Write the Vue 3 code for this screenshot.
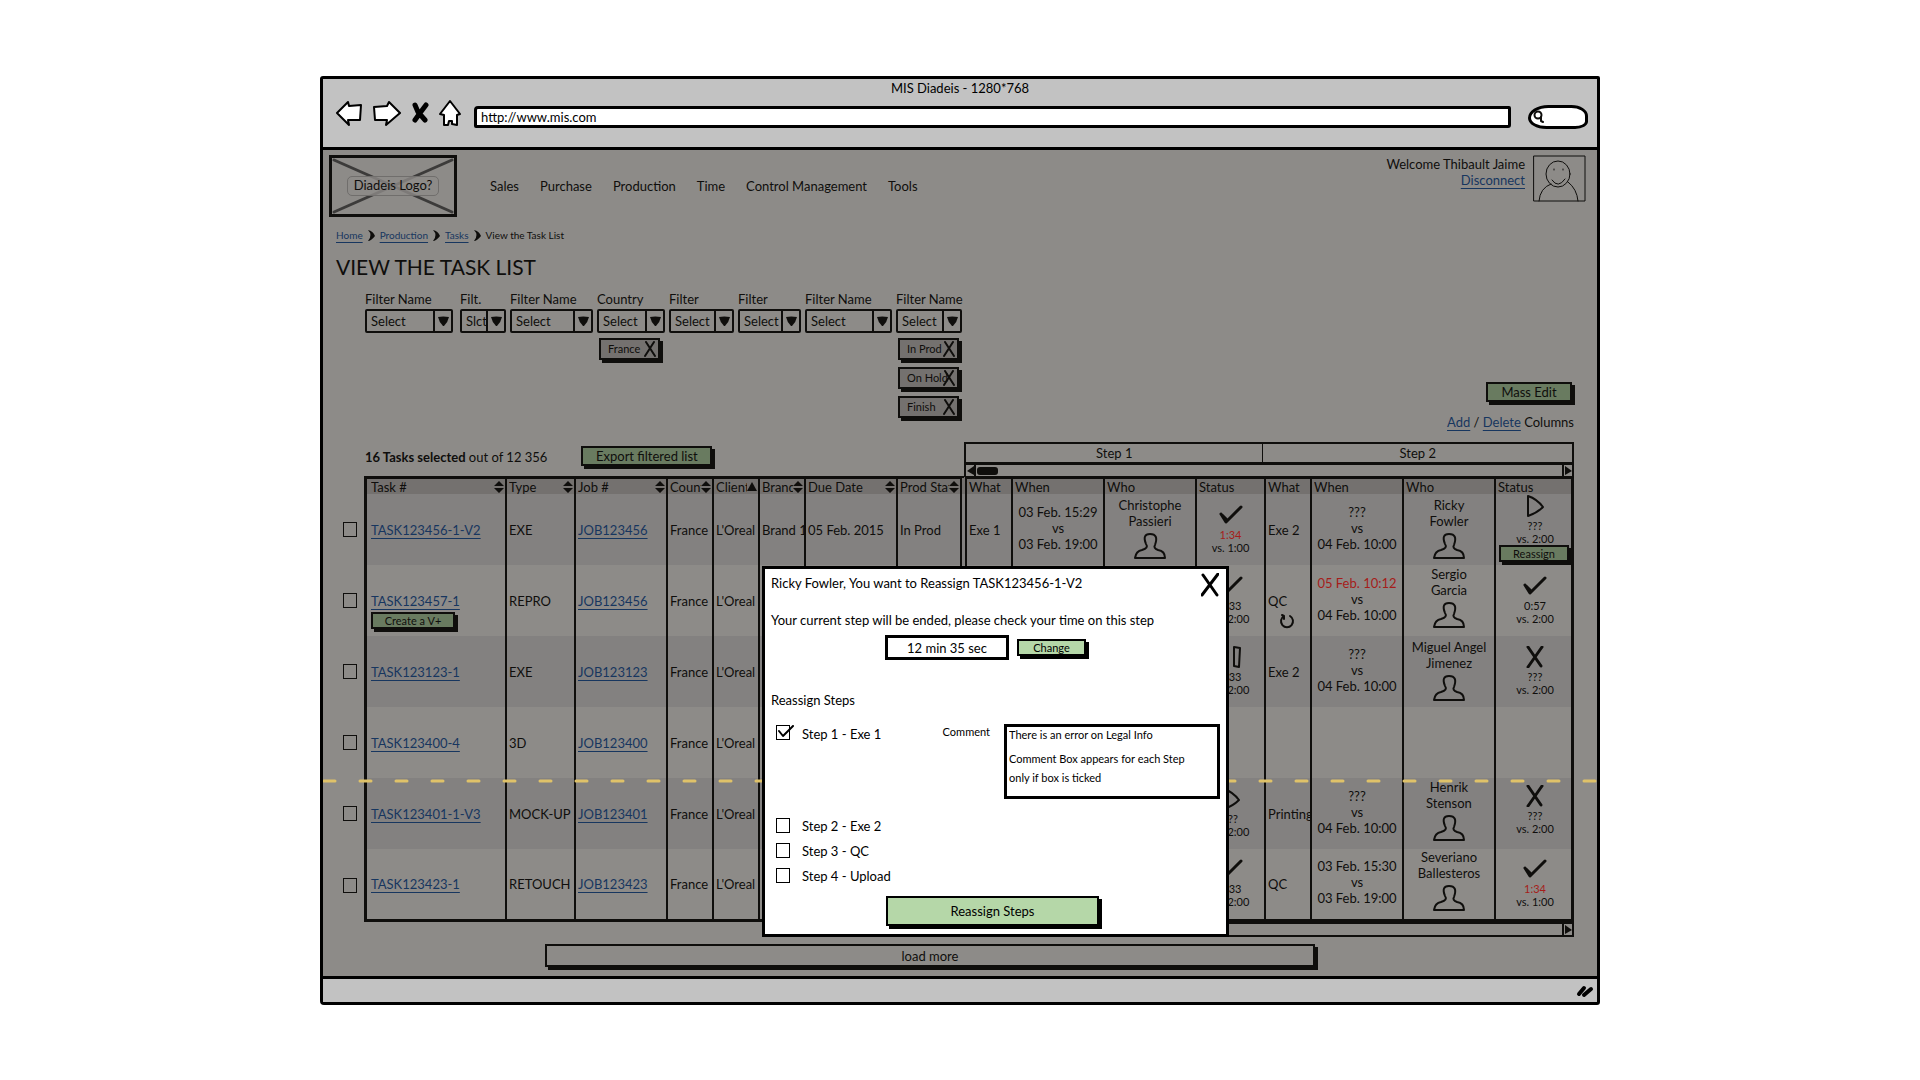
<template>
  <div class="page">
    <div class="browser">
      <!-- Barra del navegador -->
      <header class="toolbar">
        <div class="window-title">MIS Diadeis - 1280*768</div>
        <div class="toolbar-row">
          <button class="icon-btn" aria-label="Back">
            <svg width="28" height="26" viewBox="0 0 28 26"><path d="M2 13 13 2l1 4 12-1-1 15-12 0 1 5z" class="nav-shape" /></svg>
          </button>
          <button class="icon-btn" aria-label="Forward">
            <svg width="30" height="26" viewBox="0 0 30 26"><path d="M28 13 17 2l-2 4-13 1 1 13 12 0-1 5z" class="nav-shape" /></svg>
          </button>
          <button class="icon-btn stop" aria-label="Stop">
            <svg width="18" height="22" viewBox="0 0 18 22"><path d="M4 3 7 10 14 18M15 3 9 11 4 18" class="stop-shape" /></svg>
          </button>
          <button class="icon-btn" aria-label="Home">
            <svg width="24" height="28" viewBox="0 0 24 28"><path d="M12 2 2 15l4 1 0 10 4 0 1-4 3 0 0 3 5 1 0-10 3-1z" class="nav-shape" /></svg>
          </button>
          <input v-model="url" class="url" aria-label="Address">
          <label class="search">
            <svg width="12" height="14" viewBox="0 0 12 14"><circle cx="5" cy="5" r="3.5" /><path d="M8 7v4l2 1" /></svg>
            <input v-model="busqueda" aria-label="Search">
          </label>
        </div>
      </header>

      <main class="body">
        <div class="top">
          <div class="logo">
            <svg class="logo-cross" viewBox="0 0 122 56" preserveAspectRatio="none"><path d="M2 2 120 54M120 2 2 54" /></svg>
            <span class="logo-text">Diadeis Logo?</span>
          </div>
          <nav class="menu">
            <span v-for="item in menu" :key="item">{{ item }}</span>
          </nav>
          <div class="user">
            <span>Welcome Thibault Jaime</span>
            <a href="#">Disconnect</a>
          </div>
          <svg class="avatar" width="53" height="47" viewBox="0 0 53 47">
            <rect x="1" y="1" width="51" height="45" />
            <ellipse cx="25" cy="19" rx="12" ry="13" />
            <path d="M19 25q6 9 13-1M18 29Q7 33 6 46M35 27q9 7 10 19M21 14v1M30 14v1" />
          </svg>
        </div>

        <nav class="crumbs">
          <template v-for="miga in migas" :key="miga">
            <a href="#">{{ miga }}</a>
            <svg width="7" height="11" viewBox="0 0 7 11"><path d="M0 0q5 5 0 11 3 0 7-5Q5 1 0 0z" /></svg>
          </template>
          <span>View the Task List</span>
        </nav>
        <h1 class="title">VIEW THE TASK LIST</h1>

        <!-- Filtros -->
        <div class="filters-row">
          <div class="filters">
            <div v-for="(filtro, index) in filtros" :key="index" class="filter" :style="{ width: filtro.ancho + 'px' }">
              <label :for="'filtro' + index">{{ filtro.nombre }}</label>
              <div class="select-box">
                <select :id="'filtro' + index">
                  <option>{{ filtro.valor || 'Select' }}</option>
                </select>
                <span class="arrow"><svg width="11" height="10" viewBox="0 0 11 10"><path d="M0 1q5-1 11 0Q10 6 6 10H5Q1 6 0 1z" /></svg></span>
              </div>
              <button v-for="chip in filtro.chips" :key="chip" class="chip" @click="quitarChip(filtro, chip)">
                <span>{{ chip }}</span>
                <svg width="12" height="16" viewBox="0 0 12 16"><path d="M2 1 11 15M10 1 1 15" /></svg>
              </button>
            </div>
          </div>
          <div class="actions">
            <button class="btn mass">Mass Edit</button>
            <p><a href="#">Add</a> / <a href="#">Delete</a> Columns</p>
          </div>
        </div>

        <div class="summary">
          <p><b>16 Tasks selected</b> out of 12 356</p>
          <button class="btn export">Export filtered list</button>
          <div class="steps-panel">
            <div class="steps">
              <span class="step-one">Step 1</span>
              <span class="step-two">Step 2</span>
            </div>
            <div class="scroll">
              <span class="scroll-end left"><svg width="7" height="9" viewBox="0 0 7 9"><path d="M7 0v9L0 5z" /></svg></span>
              <span class="thumb"></span>
              <span class="scroll-end right"><svg width="7" height="9" viewBox="0 0 7 9"><path d="M0 0v9l7-4z" /></svg></span>
            </div>
          </div>
        </div>

        <!-- Tabla de tareas -->
        <table class="tasks">
          <colgroup>
            <col v-for="(col, index) in columnas" :key="index" :style="{ width: col.ancho + 'px' }">
          </colgroup>
          <thead>
            <tr>
              <th v-for="(col, index) in columnas" :key="index" :class="{ pick: index === 0, split: index === 8 }">
                <div class="head">
                  <span>{{ col.nombre }}</span>
                  <svg v-if="col.orden" width="11" height="12" viewBox="0 0 11 12">
                    <path v-if="col.orden === 'up'" d="M5 1 10 10H0z" />
                    <path v-else d="M5 0 10 5H0zM0 7h10L5 12z" />
                  </svg>
                </div>
              </th>
            </tr>
          </thead>
          <tbody>
            <tr v-for="tarea in tareas" :key="tarea.id">
              <td class="pick"><input v-model="tarea.marcada" type="checkbox" class="check" :aria-label="tarea.id"></td>
              <td class="task-cell">
                <div class="stack">
                  <a href="#">{{ tarea.id }}</a>
                  <button v-if="tarea.crear" class="btn small create">Create a V+</button>
                </div>
              </td>
              <td>{{ tarea.tipo }}</td>
              <td><a href="#">{{ tarea.job }}</a></td>
              <td>France</td>
              <td>L'Oreal</td>
              <td>Brand 1</td>
              <td>05 Feb. 2015</td>
              <td class="split">In Prod</td>
              <template v-for="(paso, index) in tarea.pasos" :key="index">
                <td>
                  <div class="stack">
                    <span>{{ paso.que }}</span>
                    <svg v-if="paso.repetir" class="loop" width="16" height="16" viewBox="0 0 16 16"><path d="M11 3a6 6 0 1 1-6 0M5 3 3 2M5 3l0 3" /></svg>
                  </div>
                </td>
                <td class="center">
                  <template v-if="paso.inicio">
                    <div :class="{ late: paso.tarde }">{{ paso.inicio }}</div>
                    <div>vs</div>
                    <div>{{ paso.fin }}</div>
                  </template>
                </td>
                <td class="center" :class="{ raised: tarea.subir }">
                  <template v-if="paso.quien">
                    <div v-for="parte in paso.quien" :key="parte">{{ parte }}</div>
                    <svg class="person" width="32" height="26" viewBox="0 0 32 26">
                      <path d="M1 25Q2 18 8 17q7-2 4-6Q8 1 16 1q9 0 5 11-2 3 3 5 7 1 7 8z" />
                    </svg>
                  </template>
                </td>
                <td class="center status" :class="{ raised: paso.icono === 'x' && tarea.subir }">
                  <template v-if="paso.icono">
                    <svg class="state" width="24" height="22" viewBox="0 0 24 22">
                      <path :d="iconos[paso.icono]" :class="'trazo-' + paso.icono" />
                    </svg>
                    <div :class="{ late: paso.excedido }">{{ paso.tiempo }}</div>
                    <div>vs. {{ paso.limite }}</div>
                    <button v-if="paso.reasignar" class="btn small reassign" @click="abierto = true">Reassign</button>
                  </template>
                </td>
              </template>
            </tr>
          </tbody>
        </table>
        <div class="scroll bottom-scroll">
          <span class="scroll-end right"><svg width="7" height="9" viewBox="0 0 7 9"><path d="M0 0v9l7-4z" /></svg></span>
        </div>
        <button class="load-more">load more</button>

        <svg class="fold" height="4"><line x1="1" y1="2" x2="100%" y2="2" /></svg>

        <!-- Ventana de reasignación -->
        <section v-if="abierto" class="modal">
          <div class="modal-head">
            <h2>Ricky Fowler, You want to Reassign TASK123456-1-V2</h2>
            <button class="close" aria-label="Close" @click="abierto = false">
              <svg width="18" height="24" viewBox="0 0 18 24"><path d="M2 2 16 22M17 1 1 22" /></svg>
            </button>
          </div>
          <p class="notice">Your current step will be ended, please check your time on this step</p>
          <div class="time-row">
            <input v-model="tiempo" class="time" aria-label="Time">
            <button class="btn small light">Change</button>
          </div>
          <h3>Reassign Steps</h3>
          <div class="step-row first">
            <label class="option">
              <span class="tick-box">
                <input v-model="pasos[0].activo" type="checkbox" class="check">
                <svg v-if="pasos[0].activo" width="18" height="17" viewBox="0 0 18 17"><path d="M3 6 7 11 17 1" /></svg>
              </span>
              {{ pasos[0].nombre }}
            </label>
            <label for="comentario" class="comment-label">Comment</label>
            <div class="comment">
              <textarea id="comentario" v-model="comentario" rows="1"></textarea>
              <p>Comment Box appears for each Step only if box is ticked</p>
            </div>
          </div>
          <div v-for="paso in pasos.slice(1)" :key="paso.nombre" class="step-row">
            <label class="option">
              <span class="tick-box"><input v-model="paso.activo" type="checkbox" class="check"></span>
              {{ paso.nombre }}
            </label>
          </div>
          <button class="btn light submit">Reassign Steps</button>
        </section>
      </main>

      <footer class="statusbar">
        <svg width="18" height="14" viewBox="0 0 18 14"><path d="M3 10 8 4M8 11 15 5" /></svg>
      </footer>
    </div>
  </div>
</template>

<script setup>
import { ref } from 'vue'

const url = ref('http://www.mis.com')
const busqueda = ref('')
const tiempo = ref('12 min 35 sec')
const comentario = ref('There is an error on Legal Info')
const abierto = ref(true)

const menu = ['Sales', 'Purchase', 'Production', 'Time', 'Control Management', 'Tools']
const migas = ['Home', 'Production', 'Tasks']

const filtros = ref([
  { nombre: 'Filter Name', ancho: 88 },
  { nombre: 'Filt.', ancho: 46, valor: 'Slct' },
  { nombre: 'Filter Name', ancho: 83 },
  { nombre: 'Country', ancho: 68, chips: ['France'] },
  { nombre: 'Filter', ancho: 65 },
  { nombre: 'Filter', ancho: 63 },
  { nombre: 'Filter Name', ancho: 87 },
  { nombre: 'Filter Name', ancho: 66, chips: ['In Prod', 'On Hold', 'Finish'] }
])

const columnas = [
  { nombre: '', ancho: 27 },
  { nombre: 'Task #', ancho: 140, orden: 'both' },
  { nombre: 'Type', ancho: 69, orden: 'both' },
  { nombre: 'Job #', ancho: 92, orden: 'both' },
  { nombre: 'Country', ancho: 46, orden: 'both' },
  { nombre: 'Client', ancho: 46, orden: 'up' },
  { nombre: 'Brand', ancho: 46, orden: 'both' },
  { nombre: 'Due Date', ancho: 92, orden: 'both' },
  { nombre: 'Prod Status', ancho: 69, orden: 'both' },
  { nombre: 'What', ancho: 46 },
  { nombre: 'When', ancho: 92 },
  { nombre: 'Who', ancho: 92 },
  { nombre: 'Status', ancho: 69 },
  { nombre: 'What', ancho: 46 },
  { nombre: 'When', ancho: 92 },
  { nombre: 'Who', ancho: 92 },
  { nombre: 'Status', ancho: 78 }
]

const iconos = {
  check: 'M2 10 7 18 22 3M3 11 7 15',
  play: 'M5 1 5 21Q14 18 20 12 14 4 5 1z',
  pause: 'M3 2 9 1 9 21 4 21zM15 1 21 2 20 21 15 20z',
  x: 'M5 1 18 20M19 1 5 21'
}

const ejecucion = { que: 'Exe 1', inicio: '03 Feb. 15:29', fin: '03 Feb. 19:00', quien: ['Christophe', 'Passieri'] }

const tareas = ref([
  {
    id: 'TASK123456-1-V2', tipo: 'EXE', job: 'JOB123456',
    pasos: [
      { ...ejecucion, icono: 'check', tiempo: '1:34', limite: '1:00', excedido: true },
      { que: 'Exe 2', inicio: '???', fin: '04 Feb. 10:00', quien: ['Ricky', 'Fowler'], icono: 'play', tiempo: '???', limite: '2:00', reasignar: true }
    ]
  },
  {
    id: 'TASK123457-1', tipo: 'REPRO', job: 'JOB123456', crear: true, subir: true,
    pasos: [
      { ...ejecucion, icono: 'check', tiempo: '1:33', limite: '2:00' },
      { que: 'QC', repetir: true, inicio: '05 Feb. 10:12', tarde: true, fin: '04 Feb. 10:00', quien: ['Sergio', 'Garcia'], icono: 'check', tiempo: '0:57', limite: '2:00' }
    ]
  },
  {
    id: 'TASK123123-1', tipo: 'EXE', job: 'JOB123123',
    pasos: [
      { ...ejecucion, icono: 'pause', tiempo: '1:33', limite: '2:00' },
      { que: 'Exe 2', inicio: '???', fin: '04 Feb. 10:00', quien: ['Miguel Angel', 'Jimenez'], icono: 'x', tiempo: '???', limite: '2:00' }
    ]
  },
  { id: 'TASK123400-4', tipo: '3D', job: 'JOB123400', pasos: [{}, {}] },
  {
    id: 'TASK123401-1-V3', tipo: 'MOCK-UP', job: 'JOB123401', subir: true,
    pasos: [
      { ...ejecucion, icono: 'play', tiempo: '???', limite: '2:00' },
      { que: 'Printing', inicio: '???', fin: '04 Feb. 10:00', quien: ['Henrik', 'Stenson'], icono: 'x', tiempo: '???', limite: '2:00' }
    ]
  },
  {
    id: 'TASK123423-1', tipo: 'RETOUCH', job: 'JOB123423', subir: true,
    pasos: [
      { ...ejecucion, icono: 'check', tiempo: '1:33', limite: '2:00' },
      { que: 'QC', inicio: '03 Feb. 15:30', fin: '03 Feb. 19:00', quien: ['Severiano', 'Ballesteros'], icono: 'check', tiempo: '1:34', limite: '1:00', excedido: true }
    ]
  }
])

const pasos = ref([
  { nombre: 'Step 1 - Exe 1', activo: true },
  { nombre: 'Step 2 - Exe 2', activo: false },
  { nombre: 'Step 3 - QC', activo: false },
  { nombre: 'Step 4 - Upload', activo: false }
])

const quitarChip = (filtro, chip) => {
  filtro.chips = filtro.chips.filter(c => c !== chip)
}
</script>

<style>
body {
  background-color: #fff;
}
</style>

<style scoped>
* {
  box-sizing: border-box;
}

.page {
  display: grid;
  grid-template-columns: 1fr 4fr 1fr;
  padding: 76px 0;
  font-family: Lato, "Liberation Sans", sans-serif;
  font-size: 13px;
  line-height: 16px;
  color: #0f0e0c;
}

.browser {
  grid-column: 2;
  border: 3px solid #000;
  border-radius: 3px 2px 3px 4px;
  background-color: #8d8b88;
}

p, h1, h2, h3 {
  margin: 0;
  font-size: 13px;
  font-weight: normal;
}

svg {
  fill: none;
  stroke: #0f0e0c;
  stroke-width: 2px;
  stroke-linecap: round;
  stroke-linejoin: round;
  flex-shrink: 0;
}

a {
  color: #17365f;
  text-underline-offset: 3px;
}

button, input, select, textarea {
  font-family: inherit;
  font-size: 13px;
  line-height: 16px;
  color: inherit;
}

button {
  cursor: pointer;
}

/* navegador */
.toolbar {
  height: 71px;
  border-bottom: 3px solid #000;
  background-color: #c2c2c2;
}

.window-title {
  text-align: center;
  color: #000;
  padding-top: 1px;
}

.toolbar-row {
  display: flex;
  align-items: center;
  gap: 9px;
  padding: 1px 9px 0 12px;
}

.icon-btn {
  display: flex;
  padding: 0;
  border: none;
  background: none;
}

.nav-shape {
  fill: #fff;
  stroke: #000;
  stroke-width: 2px;
}

.stop-shape {
  stroke: #000;
  stroke-width: 5px;
}

.url {
  flex: 1;
  min-width: 0;
  height: 22px;
  margin: 7px 8px 0 3px;
  padding: 0 4px;
  border: 3px solid #000;
  border-radius: 4px 2px 3px 2px;
  background-color: #fff;
  color: #000;
}

.search {
  display: flex;
  align-items: center;
  width: 60px;
  height: 24px;
  margin-top: 8px;
  padding-left: 2px;
  border: 3px solid #000;
  border-radius: 22px 18px 14px 20px / 14px 12px 8px 12px;
  background-color: #fff;
}

.search input {
  width: 36px;
  border: none;
  outline: none;
  background: none;
}

.statusbar {
  display: flex;
  justify-content: flex-end;
  align-items: center;
  height: 26px;
  padding-right: 3px;
  border-top: 3px solid #000;
  background-color: #c2c2c2;
}

.statusbar svg {
  stroke: #000;
  stroke-width: 4px;
}

/* cabecera */
.body {
  position: relative;
  padding: 5px 23px 9px 17px;
}

.top {
  display: flex;
  align-items: center;
  margin: 0 -12px 0 -11px;
}

.logo {
  display: grid;
  place-items: center;
  width: 128px;
  height: 62px;
  border: 3px solid #0f0e0c;
}

.logo-cross, .logo-text {
  grid-area: 1 / 1;
}

.logo-cross {
  width: 122px;
  height: 56px;
  stroke: #3c3b3a;
  stroke-width: 3px;
}

.logo-text {
  z-index: 1;
  padding: 0 6px 2px;
  border: 1px solid #706e6c;
  border-radius: 5px;
  background-color: #8d8b88cc;
}

.menu {
  display: flex;
  gap: 21px;
  margin-left: 33px;
}

.user {
  display: flex;
  flex-direction: column;
  align-items: flex-end;
  align-self: flex-start;
  margin-left: auto;
  padding-top: 1px;
}

.avatar {
  align-self: flex-start;
  margin-left: 8px;
  stroke-width: 1px;
}

.crumbs {
  display: flex;
  align-items: center;
  gap: 5px;
  margin: 10px 0 0 -4px;
  font-size: 10px;
}

.crumbs svg {
  fill: #0f0e0c;
  stroke: none;
}

.title {
  margin: 12px 0 0 -4px;
  font-size: 21px;
  line-height: 24px;
}

/* filtros */
.filters-row {
  display: flex;
  justify-content: space-between;
  margin-top: 12px;
}

.filters {
  display: flex;
  gap: 4px;
  padding: 0 0 12px 25px;
}

.filter {
  display: flex;
  flex-direction: column;
  white-space: nowrap;
}

.filter:first-child {
  margin-right: 3px;
}

.select-box {
  display: flex;
  height: 24px;
  margin: 2px 0 5px;
  border: 2px solid #0f0e0c;
  border-radius: 2px;
}

.select-box select {
  flex: 1;
  min-width: 0;
  padding: 0 0 0 4px;
  border: none;
  appearance: none;
  background: none;
}

.arrow {
  display: grid;
  place-items: center;
  width: 18px;
  border-left: 2px solid #0f0e0c;
}

.arrow svg, .scroll svg, .head svg {
  fill: #0f0e0c;
  stroke: none;
}

.chip {
  display: flex;
  align-items: center;
  width: 61px;
  height: 22px;
  margin: 0 0 7px 2px;
  padding: 0 2px 0 7px;
  border: 2px solid #0f0e0c;
  background-color: #74716f;
  box-shadow: 3px 3px 0 #0f0e0c;
  font-size: 11px;
}

.chip:last-child {
  margin-bottom: 0;
}

.chip span {
  flex: 1;
  min-width: 0;
  text-align: left;
  white-space: nowrap;
}

.actions {
  display: flex;
  flex-direction: column;
  align-items: flex-end;
  justify-content: flex-end;
  gap: 12px;
}

.btn {
  height: 20px;
  padding: 0;
  border: 2px solid #0f0e0c;
  background-color: #697b60;
  box-shadow: 3px 3px 0 #0f0e0c;
  text-align: center;
  line-height: 14px;
}

.btn.small {
  height: 17px;
  font-size: 11px;
  line-height: 11px;
}

.btn.light {
  border-color: #000;
  background-color: #b5d7a8;
  box-shadow: 3px 3px 0 #000;
}

.mass {
  width: 86px;
  margin-right: 2px;
}

.export {
  width: 131px;
}

.summary {
  display: flex;
  align-items: flex-start;
  margin-top: 12px;
  padding-left: 25px;
}

.summary p {
  margin-top: 7px;
}

.summary .export {
  margin: 4px 0 0 34px;
}

.steps-panel {
  width: 610px;
  margin-left: auto;
}

.steps {
  display: flex;
  height: 21px;
  border: 2px solid #0f0e0c;
  border-bottom-width: 1px;
  text-align: center;
  line-height: 18px;
}

.step-one {
  flex: 49;
  border-right: 1px solid #0f0e0c;
}

.step-two {
  flex: 51;
}

.scroll {
  display: flex;
  align-items: stretch;
  height: 13px;
  border: 2px solid #0f0e0c;
  border-bottom: none;
}

.scroll-end {
  display: grid;
  place-items: center;
  width: 10px;
}

.scroll-end.left {
  border-right: 2px solid #0f0e0c;
}

.scroll-end.right {
  margin-left: auto;
  border-left: 2px solid #0f0e0c;
}

.thumb {
  width: 21px;
  height: 8px;
  margin: 2px 1px;
  border-radius: 3px;
  background-color: #0f0e0c;
}

.bottom-scroll {
  width: 610px;
  height: 15px;
  margin-left: auto;
  border-bottom: 2px solid #0f0e0c;
}

/* tabla */
.tasks {
  width: 100%;
  table-layout: fixed;
  border-spacing: 0;
}

.tasks th, .tasks td {
  padding: 0 0 0 2px;
  border-right: 2px solid #0f0e0c;
  overflow: hidden;
  text-align: left;
  font-weight: normal;
  white-space: nowrap;
}

.tasks th {
  height: 18px;
  border-top: 3px solid #0f0e0c;
  background-color: #74716f;
}

.tasks td {
  height: 71px;
}

.tasks tbody tr:nth-child(odd) {
  background-color: #838180;
}

.tasks tr:last-child td:not(.pick) {
  border-bottom: 3px solid #0f0e0c;
}

.tasks .pick {
  padding: 0 0 0 3px;
  border-top: none;
  border-right-width: 3px;
  background-color: #8d8b88;
}

.tasks .split {
  border-right: 7px double #0f0e0c;
}

.tasks th:last-child, .tasks td:last-child {
  border-right-width: 3px;
}

.tasks .task-cell, .tasks th:nth-child(2) {
  padding-left: 4px;
}

.head {
  display: flex;
  align-items: center;
  height: 15px;
}

.head span {
  flex: 1;
  min-width: 0;
  overflow: hidden;
}

.check {
  display: block;
  width: 14px;
  height: 15px;
  margin: 0;
  border: 1px solid #0f0e0c;
  appearance: none;
}

.stack {
  display: grid;
  grid-template-rows: 26px 16px 26px;
  justify-items: start;
}

.stack > :first-child {
  grid-row: 2;
}

.stack > :nth-child(2) {
  grid-row: 3;
}

.create {
  width: 84px;
  margin-top: 3px;
}

.loop {
  margin: 4px 0 0 11px;
}

.tasks .center {
  padding: 0 0 4px;
  text-align: center;
}

.person {
  display: block;
  margin: 4px auto 0;
}

.tasks .status {
  padding-bottom: 2px;
  font-size: 11px;
  line-height: 13px;
}

.tasks .status:last-child {
  padding-left: 3px;
}

.tasks .raised {
  padding-bottom: 8px;
}

.state {
  display: block;
  margin: 0 auto 2px;
}

.trazo-check, .trazo-x {
  stroke-width: 3px;
}

.late {
  color: #a51d1a;
}

.reassign {
  display: block;
  width: 70px;
}

.load-more {
  display: block;
  width: calc(100% - 464px);
  height: 23px;
  margin: 7px 0 0 205px;
  padding: 0;
  border: 2px solid #0f0e0c;
  background: none;
  box-shadow: 3px 3px 0 #0f0e0c;
}

.fold {
  position: absolute;
  left: 0;
  top: 629px;
  width: 100%;
}

.fold line {
  stroke: #dfc269;
  stroke-width: 3px;
  stroke-dasharray: 11 25;
}

/* modal */
.modal {
  position: absolute;
  left: 439px;
  top: 416px;
  width: 467px;
  padding: 4px 6px 8px;
  border: 3px solid #000;
  background-color: #fff;
  color: #000;
}

.modal svg {
  stroke: #000;
}

.modal-head {
  display: flex;
  justify-content: space-between;
}

.modal h2 {
  margin-top: 2px;
}

.close {
  display: flex;
  margin-right: 1px;
  padding: 0;
  border: none;
  background: none;
}

.close svg {
  stroke-width: 3px;
}

.notice {
  margin-top: 15px;
}

.time-row {
  display: flex;
  align-items: center;
  gap: 8px;
  margin: 7px 0 0 114px;
}

.time {
  width: 124px;
  height: 25px;
  padding: 0;
  border: 3px solid #000;
  background-color: #fff;
  text-align: center;
}

.time-row .btn {
  width: 69px;
}

.modal h3 {
  margin-top: 32px;
}

.step-row {
  display: flex;
  height: 25px;
  padding-left: 5px;
}

.step-row.first {
  height: 92px;
  margin-top: 16px;
}

.option {
  display: flex;
  align-items: center;
  gap: 12px;
  height: 19px;
}

.tick-box {
  display: grid;
  width: 14px;
}

.tick-box > * {
  grid-area: 1 / 1;
}

.modal .check {
  border-color: #000;
}

.comment-label {
  margin-left: auto;
  font-size: 11px;
}

.comment {
  width: 216px;
  height: 75px;
  margin-left: 14px;
  padding: 0 12px 0 2px;
  border: 3px solid #000;
}

.comment textarea {
  display: block;
  width: 100%;
  height: 16px;
  padding: 0;
  border: none;
  outline: none;
  resize: none;
  background: none;
  font-size: 11px;
}

.comment p {
  margin-top: 6px;
  font-size: 11px;
  line-height: 19px;
}

.submit {
  display: block;
  width: 213px;
  height: 30px;
  margin: 5px 0 0 115px;
}
</style>
